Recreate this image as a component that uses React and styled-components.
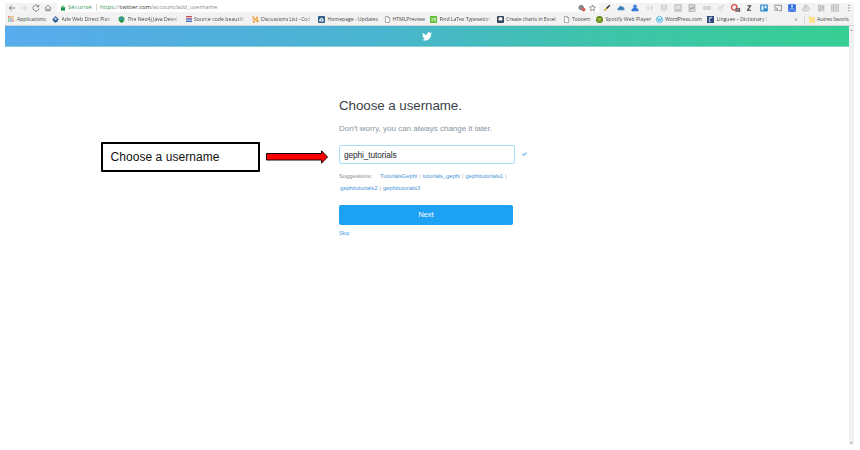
import React from 'react';
import styled, { createGlobalStyle } from 'styled-components';

const Global = createGlobalStyle`
  * { box-sizing: border-box; }
  html, body { margin: 0; background: #fff; overflow: hidden; }
  body { font-family: "Liberation Sans", Arial, sans-serif; }
  svg { display: block; flex: none; overflow: visible; }
`;

const Canvas = styled.div`
  position: relative;
  width: 860px;
  height: 450px;
  padding: 3px 6px 5px 5px;
  background: #fff;
`;
const Browser = styled.div`
  width: 849px;
  height: 442px;
  display: flex;
  flex-direction: column;
`;
const Toolbar = styled.div`
  height: 9px;
  display: flex;
  background: #f3f3f3;
`;
const NavButtons = styled.div`
  width: 52px;
  padding-left: 1px;
  display: grid;
  grid-template-columns: 12px 12px 12px 12px;
  align-items: center;
  justify-items: center;
`;
const AddressBar = styled.div`
  width: 542px;
  display: flex;
  align-items: center;
  padding-left: 4px;
  background: #fff;
  font: 5.9px/9px "Open Sans", sans-serif;
  color: #8b8b8b;
  white-space: pre;
`;
const Secure = styled.span`
  width: 28px;
  margin-left: 3px;
  color: #3a9a5b;
  letter-spacing: 0.1px;
`;
const Divider = styled.i`
  width: 1px;
  height: 7px;
  margin-right: ${p => p.$gap}px;
  background: #d6d6d6;
`;
const Url = styled.span`
  flex: 1;
  letter-spacing: -0.03px;
  b { font-weight: 400; color: #333; }
  em { font-style: normal; color: #3a9a5b; }
`;
const AddressIcons = styled.div`
  display: flex;
  gap: 3px;
  padding-right: 3px;
`;
const Extensions = styled.div`
  flex: 1;
  display: flex;
  justify-content: space-between;
  align-items: center;
  padding-left: 3px;
`;
const ExtensionSlot = styled.div`
  width: 10px;
  display: flex;
  justify-content: center;
`;
const Bookmarks = styled.div`
  height: 14px;
  display: flex;
  align-items: center;
  padding: 1px 0 0 3px;
  background: #f2f2f2;
  border-bottom: 1px solid #d5d3d6;
`;
const Bookmark = styled.div`
  width: ${p => p.$w}px;
  flex: none;
  display: flex;
  align-items: center;
  gap: ${p => p.$gap || 2.5}px;
`;
const BookmarkLabel = styled.span`
  white-space: nowrap;
  font: 5.2px/10px "Open Sans", sans-serif;
  letter-spacing: ${p => p.$ls || 0}px;
  color: #4a4a4a;
  ${p => p.$fade && 'mask-image: linear-gradient(90deg, #000 88%, rgba(0, 0, 0, 0.3));'}
`;
const Viewport = styled.div`
  flex: 1;
  display: flex;
`;
const Page = styled.main`
  width: 843.5px;
`;
const Header = styled.header`
  height: 20.5px;
  display: flex;
  align-items: center;
  justify-content: center;
  background: linear-gradient(90deg, #58abed 0%, #4ab5cf 45%, #3fc4ab 70%, #36ce93 100%);
  border-bottom: 1px solid #84d2d0;
  svg { margin-top: 1px; }
`;
const Scrollbar = styled.div`
  width: 5.5px;
  display: flex;
  flex-direction: column;
  justify-content: space-between;
  align-items: center;
  padding: 3px 0 1px;
  background: #f1f1f1;
`;
const Form = styled.form`
  width: 190px;
  margin: 49px 0 0 334px;
`;
const Title = styled.h1`
  margin: 0;
  font-size: 13.4px;
  line-height: 19px;
  font-weight: 400;
  letter-spacing: -0.08px;
  color: #3b434a;
  white-space: nowrap;
`;
const Hint = styled.p`
  margin: 9px 0 11px;
  font-size: 8px;
  line-height: 10px;
  color: #8796a2;
  white-space: nowrap;
`;
const Field = styled.div`
  display: flex;
  align-items: center;
  gap: 6.5px;
`;
const Input = styled.div`
  width: 176px;
  height: 19px;
  padding-left: 4px;
  border: 1px solid #a9dcf9;
  border-radius: 2px;
  font-size: 8.3px;
  line-height: 18px;
  letter-spacing: -0.1px;
  color: #25292c;
`;
const Suggestions = styled.div`
  margin-top: 6px;
  font-size: 5.75px;
  line-height: 12px;
  color: #8c8c8c;
  white-space: nowrap;
`;
const SuggestionRow = styled.div`
  display: flex;
  gap: 2px;
  padding-left: ${p => p.$indent || 0}px;
  i { font-style: normal; color: #b5b5b5; }
`;
const SuggestionLabel = styled.span`
  width: 39px;
`;
const Link = styled.a`
  color: #3f93d8;
`;
const NextButton = styled.div`
  width: 174px;
  height: 20px;
  margin-top: 11px;
  border-radius: 2px;
  background: #1da1f2;
  color: #fff;
  font-size: 7.3px;
  line-height: 20px;
  text-align: center;
`;
const Skip = styled.a`
  display: block;
  margin-top: 4px;
  font-size: 5.4px;
  line-height: 9px;
  color: #4a9add;
`;
const Callout = styled.div`
  position: absolute;
  left: 100.5px;
  top: 142px;
  display: flex;
  align-items: center;
  gap: 6.5px;
`;
const CalloutBox = styled.div`
  width: 159px;
  height: 30px;
  padding-left: 8px;
  border: 2px solid #000;
  border-radius: 1px;
  background: #fff;
  font-size: 12px;
  line-height: 27px;
  letter-spacing: 0.06px;
  color: #111;
`;

const Icon = ({ w = 8, h = 8, children }) => (
  <svg width={w} height={h} viewBox={`0 0 ${w} ${h}`} fill="none">{children}</svg>
);
const line = { stroke: '#777', strokeWidth: 0.9 };

const icons = {
  apps: <Icon w={6} h={6}>{['#e86b5b', '#e9a05d', '#e9c05d', '#7dbb7b', '#6f9fe0', '#e9a05d', '#7dbb7b', '#6f9fe0', '#e86b5b'].map((c, i) => <rect key={i} x={(i % 3) * 2.1} y={Math.floor(i / 3) * 2.1} width="1.5" height="1.5" fill={c} />)}</Icon>,
  ade: <Icon w={7} h={7}><path d="M3.5 0 7 3.5 3.5 7 0 3.5z" fill="#4a70ab" /><circle cx="3.5" cy="2.8" r="1" fill="#dbe6f5" /><path d="M1.6 5.2h3.8" stroke="#2b4677" /></Icon>,
  neo: <Icon w={7} h={7}><circle cx="3.5" cy="3.2" r="3" fill="#37a653" /><path d="M1 2l3-1 1 2-2 1z" fill="#438bc8" /><circle cx="3.7" cy="5.4" r="1.3" fill="#208a45" /></Icon>,
  code: <Icon w={6} h={6}><path d="M0 .7h6" stroke="#c94a4a" strokeWidth="1.3" /><path d="M0 3h6" stroke="#5b4aa0" strokeWidth="1.3" /><path d="M0 5.3h6" stroke="#4167bf" strokeWidth="1.3" /></Icon>,
  disc: <Icon w={7} h={7}><path d="M1 1.2l5 4M5.5.8l-4 5.4M.5 4l5-1" stroke="#f39a33" strokeWidth=".9" /><circle cx="1.3" cy="1.4" r="1.1" fill="#f5a54a" /><circle cx="5.2" cy="1.4" r="1" fill="#f5a54a" /><circle cx="5.5" cy="5" r="1.2" fill="#f39a33" /><circle cx="2" cy="6" r="1" fill="#f39a33" /></Icon>,
  homepage: <Icon w={7} h={7}><rect width="7" height="7" rx=".8" fill="#315e87" /><path d="M1.3 3.6 3.5 1.4l2.2 2.2v2H1.3z" fill="#e8eff6" /><rect x="2.9" y="3.4" width="1.2" height="1.2" fill="#315e87" /></Icon>,
  file: <Icon w={5} h={7}><path d="M.4.5h2.8L4.7 2v4.5H.4zM3.1.5V2h1.6" stroke="#8a8a8a" strokeWidth=".7" fill="#fff" /></Icon>,
  latex: <Icon w={7} h={7}><rect width="7" height="7" fill="#61bf34" /><path d="M1 2.6h2v2H1M6 2H4v1.5h1.7V5H3.8" stroke="#e8f8df" strokeWidth=".7" /></Icon>,
  chart: <Icon w={7} h={7}><rect width="7" height="7" rx="1" fill="#33485c" /><rect x="1.6" y="1.2" width="3.8" height="3.4" rx="1.4" fill="#fff" /></Icon>,
  spotify: <Icon w={7} h={7}><circle cx="3.5" cy="3.5" r="3.5" fill="#5f8517" /><path d="M1.3 2.6q2.5-.8 4.5.3M1.6 3.8q2-.6 3.6.2M1.8 4.9q1.7-.4 3 .2" stroke="#d0e860" strokeWidth=".6" /></Icon>,
  wp: <Icon w={7} h={7}><circle cx="3.5" cy="3.5" r="3.1" fill="#d9f1fa" stroke="#45b5df" strokeWidth=".8" /><path d="M1.4 2.2 2.6 5l.9-2.3L4.5 5l1.1-2.8" stroke="#39a9d8" strokeWidth=".8" /></Icon>,
  linguee: <Icon w={7} h={7}><rect width="7" height="7" fill="#2c4a7b" /><path d="M2.3 1v4.7h1.4M3.7 3V1.3h1.6" stroke="#e9eef6" strokeWidth=".8" /></Icon>,
  folder: <Icon w={6} h={7}><path d="M.3.8h2l.6.8h2.8v5H.3z" fill="#ffe18c" stroke="#f0cf72" strokeWidth=".4" /></Icon>,
};

// icon, label, slot width, fades out, icon gap, letter spacing
const bookmarks = [
  ['apps', 'Applications', 44, 0, 3, -0.08],
  ['ade', 'Ade Web Direct Plan', 66, 1, 2.5, 0],
  ['neo', 'The Neo4j Java Devel', 67.5, 1, 2.5, -0.03],
  ['code', 'Source code beautifi', 66, 1, 2.5, 0.02],
  ['disc', 'Discussions List - Cod', 66.5, 1, 2.5, -0.11],
  ['homepage', 'Homepage - Updates', 66.5, 0, 2.5, -0.04],
  ['file', 'HTMLPreview', 45.5, 0, 3, -0.05],
  ['latex', 'Find LaTex Typesettin', 66.5, 1, 2.5, -0.08],
  ['chart', 'Create charts in Excel', 67.5, 0, 2.5, -0.1],
  ['file', 'Tootem', 32, 0, 3, -0.08],
  ['spotify', 'Spotify Web Player', 59.5, 0, 2.5, 0.02],
  ['wp', 'WordPress.com', 51.5, 0, 2.5, -0.1],
  ['linguee', 'Linguee – Dictionary f', 87.5, 1, 2.5, -0.05],
];

const extensions = [
  <Icon><path d="M1.2 6.8 4.2 3.8" stroke="#d9a638" strokeWidth="1.5" /><path d="M3.5 4.5 6.8 1.2" stroke="#333" strokeWidth="1.5" /></Icon>,
  <Icon><path d="M1 6.3Q-.4 4.5 1.6 3.8 2.6 1 5 2.5 8 3.2 7.4 6.3z" fill="#4383b3" /></Icon>,
  <Icon><circle cx="4" cy="2.4" r="1.9" fill="#4583dc" /><path d="M.6 7.2V5.1l2.2-1h2.4l2.2 1v2.1z" fill="#3478d8" /></Icon>,
  <Icon><path d="M2.5 1.7Q.8 4 2.5 6.3M5.5 1.7Q7.2 4 5.5 6.3" stroke="#c4c4c4" strokeWidth=".9" /><path d="M3.4 5.2l1.2-2.4" stroke="#ccc" strokeWidth=".7" /></Icon>,
  <Icon><path d="M2.5 1 4 2.2 5.5 1 7.2 2.3 5.8 3.5 7.2 4.7 4 7 .8 4.7 2.2 3.5.8 2.3zM2.2 3.5 4 4.6l1.8-1.1" stroke="#aaa" strokeWidth=".7" /></Icon>,
  <Icon><rect x=".9" y=".9" width="6.2" height="6.2" fill="#e2e2e2" stroke="#aaa" strokeWidth=".8" /><path d="M2 5.8h4" stroke="#aaa" strokeWidth=".8" /></Icon>,
  <Icon><rect x="1.1" y=".8" width="5.8" height="6.4" fill="#e9e9e9" stroke="#999" strokeWidth=".8" /><path d="M2.4 3h3v1.6H2.6V6" stroke="#888" strokeWidth=".8" /></Icon>,
  <Icon><rect x=".5" y="2.7" width="7" height="2.6" rx=".8" fill="#ddd" stroke="#bbb" strokeWidth=".7" /></Icon>,
  <Icon><circle cx="3.4" cy="4.6" r="1.7" stroke="#ccc" strokeWidth=".9" /><path d="M4.7 3.2 6.6 1.2" stroke="#bbb" strokeWidth=".9" /></Icon>,
  <Icon><circle cx="3.2" cy="3.4" r="2.7" stroke="#d9453d" strokeWidth="1.3" /><rect x="4.4" y="4.1" width="4.8" height="4.6" rx=".6" fill="#736163" /><path d="M5.7 5.6h1.9M7.5 7.3H5.7" stroke="#ddd" strokeWidth=".6" /></Icon>,
  <Icon><path d="M2.3 1.7h3.3L2.5 6.2h3.6" stroke="#3a3a3a" strokeWidth="1.1" /></Icon>,
  <Icon><rect x=".2" y=".5" width="7.6" height="7" rx=".7" fill="#2887ca" /><rect x="1.4" y="1.6" width="2.1" height="4.7" fill="#e8f4fc" /><rect x="4.5" y="1.6" width="2.1" height="2.8" fill="#e8f4fc" /></Icon>,
  <Icon><path d="M.6 2.5V1.2h6.8v5.6H5M.5 6.9h.7M.5 5q1.9 0 2 2M.5 3.4q3.4.2 3.7 3.6" stroke="#747474" strokeWidth=".8" /></Icon>,
  <Icon><rect x=".2" y=".3" width="7.6" height="7.5" fill="#2a69dc" /><circle cx="4" cy="2" r="1" fill="#e5eeff" /><path d="M4 3v1.8M1.5 6.7 3.6 4M6.5 6.7 4.4 4" stroke="#e5eeff" strokeWidth=".8" /></Icon>,
  <Icon><path d="M3 1.2h2L7.5 5.3l-1 1.5h-5L.5 5.3zM3 1.2l2.4 4.1M1.6 6.8 4 2.8" stroke="#b1b1b1" strokeWidth=".8" /></Icon>,
  <Icon><path d="M1 1.8l2-.8 1 2-1.6 1.3zM1.4 5l2-.4.4 2.3-2 .2zM5.1 1v6.3M6.8 1v6.3M5 3h2" stroke="#aaa" strokeWidth=".9" /></Icon>,
  <Icon><rect x=".6" y=".8" width="6.8" height="6.4" fill="#ddd" stroke="#b9b9b9" strokeWidth=".8" /><path d="M2.5 1v6M5.3 1v6M1 4h6" stroke="#b9b9b9" strokeWidth=".6" /></Icon>,
  <Icon><g fill="#777"><circle cx="4" cy="1.4" r=".7" /><circle cx="4" cy="4" r=".7" /><circle cx="4" cy="6.6" r=".7" /></g></Icon>,
];

export default function App() {
  return (
    <Canvas>
      <Global />
      <Browser>
        <Toolbar>
          <NavButtons>
            <Icon><path d="M7 4H1.3M3.8 1.4 1.2 4l2.6 2.6" {...line} /></Icon>
            <Icon><path d="M1 4h5.7M4.2 1.4 6.8 4 4.2 6.6" {...line} stroke="#d4d4d4" /></Icon>
            <Icon><path d="M6.4 2.3A3 3 0 1 0 6.9 4.6M6.8.8v2H4.6" {...line} /></Icon>
            <Icon><path d="M.7 4.3 4 1.2l3.3 3.1M1.8 3.5v3.4h1.6V5h1.2v1.9h1.6V3.5" {...line} strokeWidth=".8" /></Icon>
          </NavButtons>
          <AddressBar>
            <Icon w={4} h={6}><rect x="0" y="2.3" width="4" height="3.3" fill="#159447" /><path d="M.9 2.6V1.4q1.1-1.4 2.2 0v1.2" stroke="#159447" strokeWidth=".7" /></Icon>
            <Secure>Sécurisé</Secure>
            <Divider $gap={3} />
            <Url><em>https</em>://<b>twitter.com</b>/account/add_username</Url>
            <AddressIcons>
              <Icon><circle cx="3.2" cy="3.6" r="2.6" fill="#777" /><path d="M1.5 3h3M2 4.6h2" stroke="#bbb" strokeWidth=".6" /><circle cx="5.6" cy="5.6" r="1.9" fill="#d95b57" /></Icon>
              <Icon w={7}><path d="M3.5.9l.9 2 2.1.2L4.9 4.6l.5 2.2-1.9-1.2-1.9 1.2.5-2.2L.5 3.1l2.1-.2z" stroke="#666" strokeWidth=".7" /></Icon>
            </AddressIcons>
          </AddressBar>
          <Extensions>
            {extensions.map((icon, i) => <ExtensionSlot key={i}>{icon}</ExtensionSlot>)}
          </Extensions>
        </Toolbar>
        <Bookmarks>
          {bookmarks.map(([icon, label, w, fade, gap, ls]) => (
            <Bookmark key={label} $w={w} $gap={gap}>
              {icons[icon]}
              <BookmarkLabel $fade={fade} $ls={ls}>{label}</BookmarkLabel>
            </Bookmark>
          ))}
          <Bookmark $w={9}><BookmarkLabel>»</BookmarkLabel></Bookmark>
          <Divider $gap={4} />
          <Bookmark $w={41}>{icons.folder}<BookmarkLabel $ls={-0.12}>Autres favoris</BookmarkLabel></Bookmark>
        </Bookmarks>
        <Viewport>
          <Page>
            <Header>
              <svg width="10" height="9" viewBox="0 0 24 20" fill="#fff"><path d="M24 2.4c-.9.4-1.8.7-2.8.8 1-.6 1.8-1.6 2.2-2.7-1 .6-2 1-3.1 1.2A4.9 4.9 0 0 0 11.9 6.2C7.8 6 4.2 4 1.7 1A4.9 4.9 0 0 0 3.2 7.6c-.8 0-1.6-.2-2.2-.6v.1c0 2.4 1.7 4.4 3.9 4.8-.7.2-1.5.2-2.2.1.6 2 2.4 3.4 4.6 3.4A9.9 9.9 0 0 1 0 17.5 14 14 0 0 0 21.5 5c1-.7 1.8-1.6 2.5-2.6z" /></svg>
            </Header>
            <Form>
              <Title>Choose a username.</Title>
              <Hint>Don't worry, you can always change it later.</Hint>
              <Field>
                <Input>gephi_tutorials</Input>
                <Icon w={5} h={4}><path d="M.4 2.1 1.9 3.3 4.6.7" stroke="#5dade9" strokeWidth="1.1" /></Icon>
              </Field>
              <Suggestions>
                <SuggestionRow>
                  <SuggestionLabel>Suggestions:</SuggestionLabel>
                  <Link>TutorialsGephi</Link><i>|</i><Link>tutorials_gephi</Link><i>|</i><Link>gephitutorials1</Link><i>|</i>
                </SuggestionRow>
                <SuggestionRow $indent={1}>
                  <Link>gephitutorials2</Link><i>|</i><Link>gephitutorials3</Link>
                </SuggestionRow>
              </Suggestions>
              <NextButton>Next</NextButton>
              <Skip>Skip</Skip>
            </Form>
          </Page>
          <Scrollbar>
            <Icon w={3} h={2}><path d="M0 2 1.5 0 3 2z" fill="#aaa" /></Icon>
            <Icon w={3} h={2}><path d="M0 0h3L1.5 2z" fill="#aaa" /></Icon>
          </Scrollbar>
        </Viewport>
      </Browser>
      <Callout>
        <CalloutBox>Choose a username</CalloutBox>
        <Icon w={62} h={14}><path d="M.5 3.5H55.5V.8L61.5 7 55.5 13.2V10H.5z" fill="#f00" stroke="#1a0000" strokeWidth="1" /></Icon>
      </Callout>
    </Canvas>
  );
}
